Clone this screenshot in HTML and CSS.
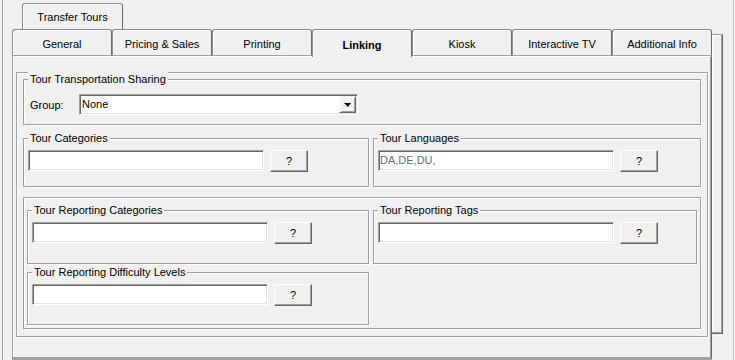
FILE: index.html
```html
<!DOCTYPE html>
<html lang="en">
<head>
    <meta charset="UTF-8">
    <title>Transfer Tours - Linking</title>
    <link rel="stylesheet" href="styles.css">
</head>
<body>
    <div class="window">
        <div class="outer-tabs">
            <div class="tab outer-tab">Transfer Tours</div>
        </div>

        <div class="tabctl">
            <div class="tabcol">
                <div class="tabs">
                    <div class="tab">General</div>
                    <div class="tab">Pricing &amp; Sales</div>
                    <div class="tab">Printing</div>
                    <div class="tab active">Linking</div>
                    <div class="tab">Kiosk</div>
                    <div class="tab">Interactive TV</div>
                    <div class="tab">Additional Info</div>
                </div>

                <div class="page">
                    <div class="frame big">
                        <!-- transportation -->
                        <div class="group transport">
                            <span class="caption">Tour Transportation Sharing</span>
                            <div class="row">
                                <span class="label">Group:</span>
                                <div class="combo">
                                    <span class="combo-text">None</span>
                                    <span class="combo-btn"><span class="arrow"></span></span>
                                </div>
                            </div>
                        </div>

                        <!-- categories / languages -->
                        <div class="pair">
                            <div class="group g-cat">
                                <span class="caption">Tour Categories</span>
                                <div class="field">
                                    <div class="input"></div>
                                    <div class="btn">?</div>
                                </div>
                            </div>
                            <div class="group g-lang">
                                <span class="caption">Tour Languages</span>
                                <div class="field">
                                    <div class="input disabled">DA,DE,DU,</div>
                                    <div class="btn">?</div>
                                </div>
                            </div>
                        </div>

                        <!-- reporting -->
                        <div class="frame reporting">
                            <div class="pair tight">
                                <div class="group rep-cat">
                                    <span class="caption">Tour Reporting Categories</span>
                                    <div class="field">
                                        <div class="input"></div>
                                        <div class="btn">?</div>
                                    </div>
                                </div>
                                <div class="group rep-tags">
                                    <span class="caption">Tour Reporting Tags</span>
                                    <div class="field">
                                        <div class="input"></div>
                                        <div class="btn">?</div>
                                    </div>
                                </div>
                            </div>
                            <div class="group rep-diff">
                                <span class="caption">Tour Reporting Difficulty Levels</span>
                                <div class="field">
                                    <div class="input"></div>
                                    <div class="btn">?</div>
                                </div>
                            </div>
                        </div>
                    </div>
                </div>
            </div>
            <div class="side"></div>
        </div>
    </div>
</body>
</html>
```

FILE: styles.css
```css
* {
    box-sizing: border-box;
}

body {
    margin: 0;
    background: #f0f0f0;
    font-family: 'Liberation Sans', Arial, sans-serif;
    font-size: 11px;
    color: #000;
    overflow: hidden;
}

.window {
    margin-left: 2px;
    width: 732px;
    height: 360px;
    padding-top: 3px;
    border-left: 1px solid #a0a0a0;
    border-right: 1px solid #c4c4c4;
    box-shadow: inset 1px 0 #fff;
}

/* tabs */
.outer-tabs {
    padding-left: 19px;
    height: 26px;
}

.tab {
    width: 100px;
    height: 27px;
    padding-top: 2px;
    display: flex;
    align-items: center;
    justify-content: center;
    background: #f0f0f0;
    border: 1px solid #8c8c8c;
    border-right-color: #6a6a6a;
    border-bottom: none;
    border-radius: 3px 3px 0 0;
    box-shadow: inset 1px 1px #fff;
    white-space: nowrap;
}

.outer-tab {
    width: 101px;
    height: 26px;
    padding-top: 1px;
}

.tabs .tab {
    border-bottom: 1px solid #a0a0a0;
}

.tabs .tab.active {
    position: relative;
    height: 28px;
    margin-bottom: -1px;
    border-bottom: none;
    font-weight: bold;
}

.tabctl {
    display: flex;
    margin-left: 9px;
}

.tabcol {
    width: 700px;
}

.tabs {
    display: flex;
    height: 27px;
}

.page {
    height: 304px;
    padding: 16px 0 0 3px;
    border-left: 1px solid #a0a0a0;
    border-right: 1px solid #6a6a6a;
    border-bottom: 3px solid #a0a0a0;
    box-shadow: inset 1px 1px #fff, inset -1px 0 #a0a0a0;
}

.side {
    width: 11px;
    height: 300px;
    margin-top: 5px;
    border-top: 1px solid #a0a0a0;
    border-right: 1px solid #6a6a6a;
    border-bottom: 1px solid #6a6a6a;
    box-shadow: inset -1px -1px #a0a0a0, inset 1px 1px #fff;
}

/* etched frames and group boxes */
.frame,
.group {
    border: 1px solid #a0a0a0;
    box-shadow: 1px 1px 0 #fff, inset 1px 1px 0 #fff;
}

.big {
    width: 692px;
    height: 265px;
    padding: 6px 0 0 6px;
}

.group {
    display: flex;
    flex-direction: column;
    align-items: flex-start;
}

.caption {
    margin: -8px 0 0 4px;
    padding: 0 2px;
    line-height: 14px;
    background: #f0f0f0;
    white-space: nowrap;
}

.transport {
    width: 678px;
    height: 46px;
}

.row {
    display: flex;
    align-items: center;
    margin-top: 8px;
    padding-left: 6px;
}

.label {
    width: 49px;
}

.combo {
    width: 279px;
    height: 21px;
    display: flex;
    background: #fff;
    border: 1px solid;
    border-color: #a0a0a0 #fff #fff #a0a0a0;
    box-shadow: inset 1px 1px #6a6a6a, inset -1px -1px #e3e3e3;
}

.combo-text {
    flex: 1;
    padding: 3px 0 0 2px;
}

.combo-btn {
    width: 17px;
    height: 17px;
    margin: 1px 1px 0 0;
    display: flex;
    align-items: center;
    justify-content: center;
    background: #f0f0f0;
    border: 1px solid;
    border-color: #f0f0f0 #6a6a6a #6a6a6a #f0f0f0;
    box-shadow: inset 1px 1px #fff, inset -1px -1px #a0a0a0;
}

.arrow {
    width: 0;
    height: 0;
    border-left: 4px solid transparent;
    border-right: 3px solid transparent;
    border-top: 4px solid #000;
}

.pair {
    display: flex;
    gap: 4px;
    margin-top: 13px;
}

.pair.tight {
    margin-top: 0;
}

.g-cat {
    width: 346px;
    height: 49px;
}

.g-lang {
    width: 328px;
    height: 49px;
}

.field {
    display: flex;
    gap: 6px;
    margin: 5px 0 0 4px;
}

.input {
    width: 236px;
    height: 21px;
    padding: 3px 0 0 1px;
    background: #fff;
    border: 1px solid;
    border-color: #a0a0a0 #fff #fff #a0a0a0;
    box-shadow: inset 1px 1px #6a6a6a, inset -1px -1px #e3e3e3;
}

.input.disabled {
    color: #6d6d6d;
}

.btn {
    width: 38px;
    height: 22px;
    display: flex;
    align-items: center;
    justify-content: center;
    background: #f0f0f0;
    border: 1px solid;
    border-color: #fff #6a6a6a #6a6a6a #fff;
    box-shadow: inset -1px -1px #a0a0a0;
}

.reporting {
    width: 678px;
    height: 132px;
    margin-top: 10px;
    padding: 12px 0 0 3px;
}

.rep-cat {
    width: 342px;
    height: 54px;
}

.rep-tags {
    width: 324px;
    height: 54px;
}

.rep-diff {
    width: 342px;
    height: 53px;
    margin-top: 8px;
}
```
